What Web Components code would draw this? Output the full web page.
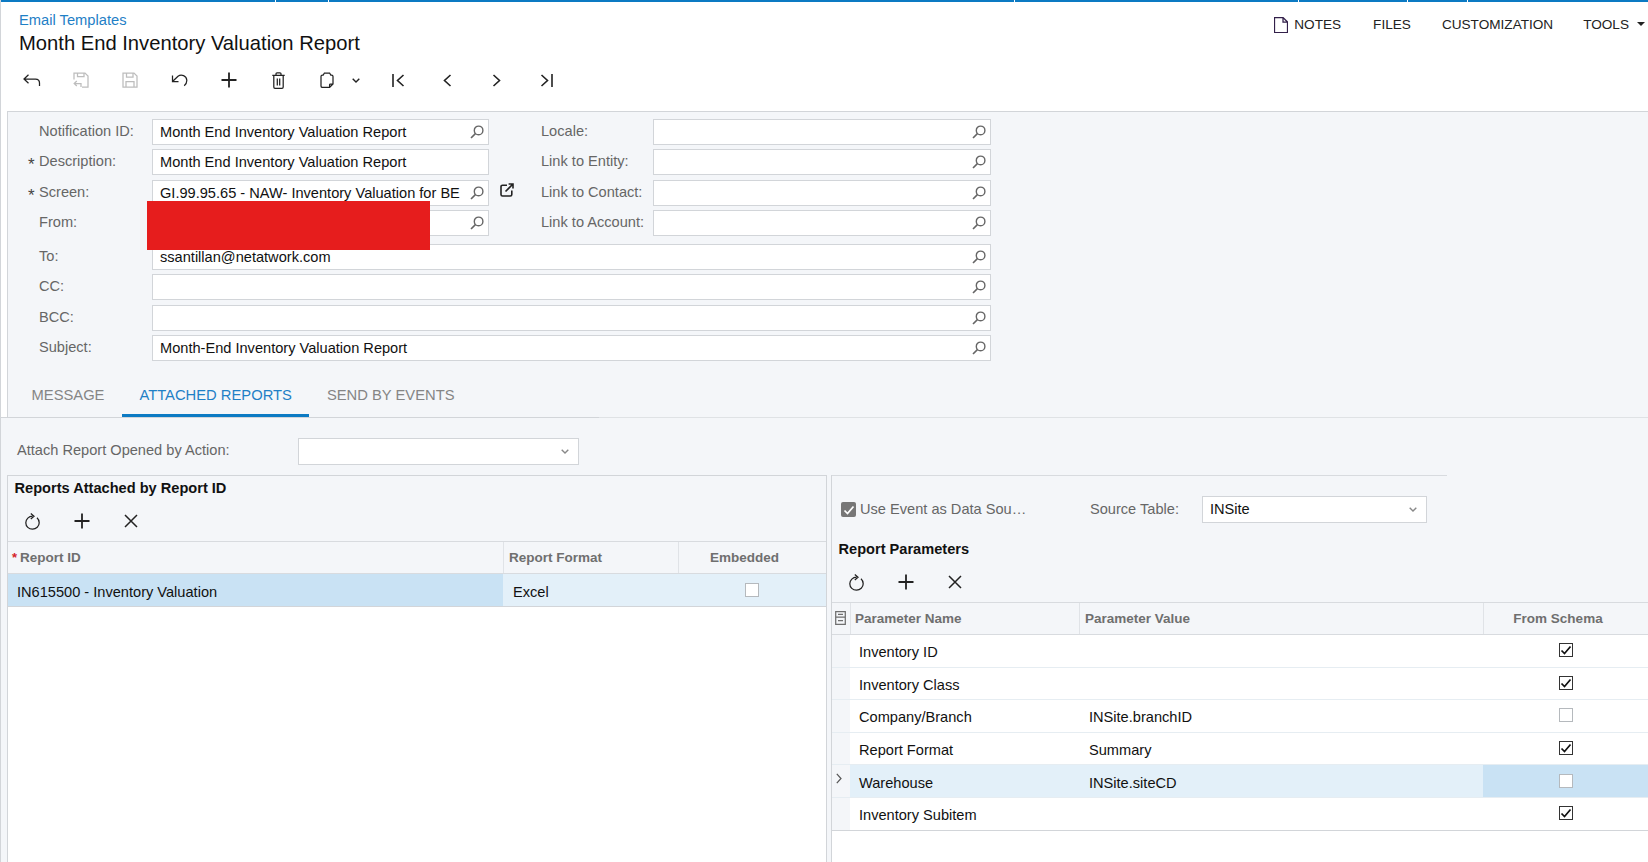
<!DOCTYPE html>
<html lang="en">
<head>
<meta charset="utf-8">
<title>Email Templates</title>
<style>
  html, body { margin: 0; padding: 0; background: #fff; }
</style>
</head>
<body>
<ac-page>
  <ac-stripe></ac-stripe>
  <ac-header></ac-header>
  <ac-form>
    <ac-tabs slot="tabs"></ac-tabs>
  </ac-form>
  <ac-attach></ac-attach>
  <ac-panels>
    <ac-reports slot="left"></ac-reports>
    <ac-params slot="right"></ac-params>
  </ac-panels>
  <ac-redaction></ac-redaction>
</ac-page>

<script>
const ICONS = {
  back: [18, 13, `<path d="M1 5H12.5C15 5 16.5 6.6 16.5 9V12M5.5 .8L1 5L5.5 9.2"/>`],
  saveclose: [16, 16, `<path d="M1 7.5V1H12L15 4V15H9M4.5 1V4.5H11V1M8 15V11.5H1.2M3.8 9L1.2 11.5L3.8 14"/>`],
  save: [16, 16, `<path d="M1 1H12L15 4V15H1ZM4.5 1V5H11V1M4 15V9.5H12V15"/>`],
  undo: [17, 13, `<path d="M1.5 7.5L7 2.2C10.5 -.3 15.5 2 15.8 6.2C15.9 8.4 15 10.4 13.2 11.8M1.5 1.6V7.5H7.5"/>`],
  plus: [16, 16, `<path d="M8 .5V15.5M.5 8H15.5" stroke-width="1.8"/>`],
  trash: [13, 17, `<path d="M1.8 3.5V15C1.8 15.8 2.4 16.3 3 16.3H10C10.7 16.3 11.2 15.8 11.2 15V3.5M.3 3.3H12.7M4 3.2V1.8C4 1.2 4.4 .8 5 .8H8C8.6 .8 9 1.2 9 1.8V3.2M5.3 6.5V13.5M7.7 6.5V13.5"/>`],
  paste: [14, 16, `<path d="M3.2 3H2.4C1.5 3 1 3.6 1 4.4V14C1 14.9 1.5 15.4 2.4 15.4H9.6L13 12V4.4C13 3.6 12.5 3 11.6 3H10.8L9.6 1H4.4ZM13 12H10.4C9.9 12 9.6 12.3 9.6 12.8V15.4"/>`],
  chevdown: [8, 5, `<path d="M.7 .7L4 4L7.3 .7" stroke-width="1.4"/>`],
  first: [13, 13, `<path d="M1 0V13M11.5 1L5.5 6.5L11.5 12" stroke-width="1.6"/>`],
  prev: [9, 13, `<path d="M7.5 1L1.5 6.5L7.5 12" stroke-width="1.6"/>`],
  next: [9, 13, `<path d="M1.5 1L7.5 6.5L1.5 12" stroke-width="1.6"/>`],
  last: [13, 13, `<path d="M12 0V13M1.5 1L7.5 6.5L1.5 12" stroke-width="1.6"/>`],
  search: [14, 14, `<circle cx="8.6" cy="5.4" r="4.3" stroke-width="1.4"/><path d="M5.4 8.6L1 13" stroke-width="1.6"/>`],
  external: [14, 14, `<path d="M7 2.2H2.5C1.6 2.2 1 2.8 1 3.7V11.5C1 12.4 1.6 13 2.5 13H10.3C11.2 13 11.8 12.4 11.8 11.5V7.5M5.5 8.5L13 1M8.6 1H13V5.4" stroke-width="1.6"/>`],
  note: [14, 16, `<path d="M.5 .5H9L13.5 5V15.5H.5ZM9 .5V5H13.5"/>`],
  caret: [8, 4, `<path d="M0 0H8L4 4Z" fill="currentColor" stroke="none"/>`],
  refresh: [15, 17, `<path d="M7.5 3.2C3.9 3.2 .8 6.1 .8 9.8C.8 13.5 3.8 16.2 7.5 16.2C11.2 16.2 14.2 13.3 14.2 9.8C14.2 7.8 13.3 6 12 4.8M5.8 .6L9 3.3L5.8 6"/>`],
  close: [14, 14, `<path d="M1 1L13 13M13 1L1 13" stroke-width="1.5"/>`],
  columns: [11, 14, `<path d="M.7 .7H10.3V13.3H.7ZM.7 6H10.3M3 3.3H8M3 9.5H8"/>`],
  rowpointer: [6, 11, `<path d="M.8 .8L5 5.5L.8 10.2" stroke-width="1.2"/>`],
  check: [12, 10, `<path d="M1.5 5.5L4.5 8.5L10.5 1.5" stroke-width="1.7"/>`]
};

class AcIcon extends HTMLElement{
  connectedCallback(){
    if(this.shadowRoot) return;
    const root = this.attachShadow({mode: "open"});
    const [w, h, body] = ICONS[this.getAttribute("name")];
    root.innerHTML = `
      <style>
        :host{ display: inline-flex; line-height: 0; color: inherit; }
        svg{ display: block; fill: none; stroke: currentColor; stroke-width: 1.25; }
      </style>
      <svg width="${w}" height="${h}" viewBox="0 0 ${w} ${h}">${body}</svg>`;
  }
}
customElements.define("ac-icon", AcIcon);

class AcPage extends HTMLElement{
  constructor(){
    super();
    this.attachShadow({mode: "open"}).innerHTML = `
      <style>
        :host{
          display: block;
          position: relative;
          width: 1647px;
          height: 862px;
          overflow: hidden;
          border-left: 1px solid #d2d5d9;
          background: #fff;
          color: #111;
          font-family: "Liberation Sans", Arial, sans-serif;
          font-size: 14.6px;
        }
      </style>
      <slot></slot>`;
  }
}
customElements.define("ac-page", AcPage);

class AcStripe extends HTMLElement{
  constructor(){
    super();
    const segs = [275, 52, 686, 283, 108, 59, 180];
    this.attachShadow({mode: "open"}).innerHTML = `
      <style>
        :host{ display: flex; gap: 1px; height: 2px; margin-left: -1px; background: #fff; }
        i{ display: block; background: #0c7ac3; }
      </style>
      ${segs.map(w => `<i style="width:${w}px"></i>`).join("")}`;
  }
}
customElements.define("ac-stripe", AcStripe);

class AcHeader extends HTMLElement{
  constructor(){
    super();
    const tool = (name, color, width) =>
      `<span class="tool" style="width:${width || 49.3}px;color:${color || "#222"}"><ac-icon name="${name}"></ac-icon></span>`;
    this.attachShadow({mode: "open"}).innerHTML = `
      <style>
        :host{ display: block; height: 109px; }
        .top{ display: flex; justify-content: space-between; height: 56px; }
        .titles{ padding: 9px 0 0 18px; }
        .crumb{ color: #1f80c6; font-size: 14.7px; line-height: 18px; }
        h1{ margin: 2px 0 0; font-size: 20.2px; font-weight: normal; line-height: 25px; color: #111; }
        .actions{ display: flex; align-items: center; height: 44px; font-size: 13.6px; color: #222; }
        .actions span{ display: inline-flex; align-items: center; }
        .notes ac-icon{ margin-right: 6px; margin-top: 2px; color: #33204a; }
        .files{ margin-left: 32px; }
        .custom{ margin-left: 31px; }
        .tools{ margin-left: 30px; margin-right: 3px; }
        .tools ac-icon{ margin-left: 8px; }
        .bar{ display: flex; align-items: center; height: 24px; margin-top: 10px; padding-left: 6px; }
        .tool{ display: inline-flex; justify-content: center; align-items: center; }
        .chev{ display: inline-flex; width: 21.5px; color: #222; }
      </style>
      <div class="top">
        <div class="titles">
          <div class="crumb">Email Templates</div>
          <h1>Month End Inventory Valuation Report</h1>
        </div>
        <div class="actions">
          <span class="notes"><ac-icon name="note"></ac-icon>NOTES</span>
          <span class="files">FILES</span>
          <span class="custom">CUSTOMIZATION</span>
          <span class="tools">TOOLS<ac-icon name="caret"></ac-icon></span>
        </div>
      </div>
      <div class="bar">
        ${tool("back")}
        ${tool("saveclose", "#bdbdbd")}
        ${tool("save", "#bdbdbd")}
        ${tool("undo")}
        ${tool("plus")}
        ${tool("trash")}
        ${tool("paste")}
        <span class="chev"><ac-icon name="chevdown"></ac-icon></span>
        ${tool("first")}
        ${tool("prev")}
        ${tool("next")}
        ${tool("last")}
      </div>`;
  }
}
customElements.define("ac-header", AcHeader);

class AcField extends HTMLElement{
  constructor(){
    super();
    const label = this.getAttribute("label");
    const value = this.getAttribute("value") || "";
    const req = this.hasAttribute("required");
    const search = this.hasAttribute("nosearch") ? "" : `<ac-icon name="search"></ac-icon>`;
    this.attachShadow({mode: "open"}).innerHTML = `
      <style>
        :host{ display: grid; grid-template-columns: 11px var(--label-width, 113px) 1fr; align-items: center; height: 26px; }
        .star{ font-size: 17px; color: #444; padding-top: 6px; line-height: 16px; }
        label{ color: #666; padding-bottom: 2px; white-space: nowrap; }
        .box{
          display: flex; align-items: center; justify-content: space-between;
          box-sizing: border-box; height: 26px;
          padding: 0 4px 0 7px;
          border: 1px solid #d2d5d9; background: #fff; color: #111;
          white-space: nowrap;
        }
        ac-icon{ color: #666; flex: none; }
      </style>
      <span class="star">${req ? "*" : ""}</span>
      <label>${label}</label>
      <div class="box"><span>${value}</span>${search}</div>`;
  }
}
customElements.define("ac-field", AcField);

class AcForm extends HTMLElement{
  constructor(){
    super();
    this.attachShadow({mode: "open"}).innerHTML = `
      <style>
        :host{
          display: flex; flex-direction: column;
          box-sizing: border-box;
          height: 306px;
          margin-left: 6px;
          padding: 6.6px 0 0 20px;
          border-top: 1px solid #d2d5d9;
          border-left: 1px solid #d2d5d9;
          background: #f4f6f9;
        }
        .upper{ display: grid; grid-template-columns: 461px 41px 461px; row-gap: 4.5px; }
        .lower{ display: grid; grid-template-columns: 963px; row-gap: 4.4px; margin-top: 7.7px; }
        .short{ --label-width: 112px; }
        .ext{ color: #222; padding: 3px 0 0 11px; line-height: 0; }
        .tabs{ margin: auto 0 0 -14px; }
      </style>
      <div class="upper">
        <ac-field label="Notification ID:" value="Month End Inventory Valuation Report"></ac-field>
        <span></span>
        <ac-field class="short" label="Locale:"></ac-field>
        <ac-field label="Description:" value="Month End Inventory Valuation Report" required nosearch></ac-field>
        <span></span>
        <ac-field class="short" label="Link to Entity:"></ac-field>
        <ac-field label="Screen:" value="GI.99.95.65 - NAW- Inventory Valuation for BE" required></ac-field>
        <span class="ext"><ac-icon name="external"></ac-icon></span>
        <ac-field class="short" label="Link to Contact:"></ac-field>
        <ac-field label="From:"></ac-field>
        <span></span>
        <ac-field class="short" label="Link to Account:"></ac-field>
      </div>
      <div class="lower">
        <ac-field label="To:" value="ssantillan@netatwork.com"></ac-field>
        <ac-field label="CC:"></ac-field>
        <ac-field label="BCC:"></ac-field>
        <ac-field label="Subject:" value="Month-End Inventory Valuation Report"></ac-field>
      </div>
      <div class="tabs"><slot name="tabs"></slot></div>`;
  }
}
customElements.define("ac-form", AcForm);

class AcTabs extends HTMLElement{
  constructor(){
    super();
    this.attachShadow({mode: "open"}).innerHTML = `
      <style>
        :host{ display: flex; height: 43px; font-size: 14.75px; color: #858585; }
        span{
          box-sizing: border-box; height: 43px;
          padding: 12px 17.5px 0;
          line-height: 18px;
          white-space: nowrap;
        }
        .on{ color: #1f80c6; border-bottom: 3px solid #0c7ac3; }
      </style>
      <span>MESSAGE</span>
      <span class="on">ATTACHED REPORTS</span>
      <span>SEND BY EVENTS</span>`;
  }
}
customElements.define("ac-tabs", AcTabs);

class AcSelect extends HTMLElement{
  constructor(){
    super();
    this.attachShadow({mode: "open"}).innerHTML = `
      <style>
        :host{
          display: flex; align-items: center; justify-content: space-between;
          box-sizing: border-box; height: 26.5px;
          padding: 0 9px 0 7px;
          border: 1px solid #d2d5d9; background: #fff; color: #111;
        }
        span{ padding-bottom: 2px; }
        ac-icon{ color: #888; }
      </style>
      <span><slot></slot></span>
      <ac-icon name="chevdown"></ac-icon>`;
  }
}
customElements.define("ac-select", AcSelect);

class AcAttach extends HTMLElement{
  constructor(){
    super();
    this.attachShadow({mode: "open"}).innerHTML = `
      <style>
        :host{ display: block; height: 58px; box-sizing: border-box; background: #f4f6f9; border-top: 1px solid #dfe2e5; }
        .dark{ height: 1px; width: 598px; background: #d2d5d9; margin-top: -1px; }
        .row{ display: flex; align-items: center; padding: 20px 0 0 16px; }
        label{ width: 281.4px; color: #666; padding-bottom: 2px; }
        ac-select{ width: 280.6px; }
      </style>
      <div class="dark"></div>
      <div class="row">
        <label>Attach Report Opened by Action:</label>
        <ac-select></ac-select>
      </div>`;
  }
}
customElements.define("ac-attach", AcAttach);

class AcPanels extends HTMLElement{
  constructor(){
    super();
    this.attachShadow({mode: "open"}).innerHTML = `
      <style>
        :host{ display: flex; gap: 4px; height: 387px; padding-left: 6px; background: #f4f6f9; }
        ::slotted([slot=left]){ width: 820px; flex: none; }
        ::slotted([slot=right]){ flex: 1; min-width: 0; }
      </style>
      <slot name="left"></slot>
      <slot name="right"></slot>`;
  }
}
customElements.define("ac-panels", AcPanels);

class AcGridTools extends HTMLElement{
  constructor(){
    super();
    this.attachShadow({mode: "open"}).innerHTML = `
      <style>
        :host{ display: flex; align-items: center; height: 24px; color: #222; }
        span{ display: inline-flex; justify-content: center; width: 49px; }
      </style>
      <span><ac-icon name="refresh"></ac-icon></span>
      <span><ac-icon name="plus"></ac-icon></span>
      <span><ac-icon name="close"></ac-icon></span>`;
  }
}
customElements.define("ac-grid-tools", AcGridTools);

class AcGrid extends HTMLElement{
  constructor(){
    super();
    this.shadowDOM = this.attachShadow({mode: "open"});
  }

  set data(data){
    this._data = data;
    this.render();
  }

  renderBox(on){
    const cls = on ? "cb on" : "cb";
    return `<span class="${cls}">${on ? `<ac-icon name="check"></ac-icon>` : ""}</span>`;
  }

  render(){
    const d = this._data;
    const head = d.columns.map(c => `
      <div class="th ${c.center ? "center" : ""}" style="${c.pad ? `padding-left:${c.pad}px` : ""}">
        ${c.star ? `<b class="star">*</b>` : ""}${c.icon ? `<ac-icon name="${c.icon}"></ac-icon>` : (c.title || "")}
      </div>`).join("");
    const rows = d.rows.map(r => {
      const cells = r.cells.map((v, i) => {
        const col = d.columns[i];
        const sel = r.selected ? (i === r.activeCell ? "active" : "selected") : "";
        if(col.pointer){
          return `<div class="td pointer">${r.selected ? `<ac-icon name="rowpointer"></ac-icon>` : ""}</div>`;
        }
        if(col.center){
          return `<div class="td center ${sel}">${this.renderBox(v)}</div>`;
        }
        return `<div class="td ${sel}" style="padding-left:${col.textPad}px">${v}</div>`;
      }).join("");
      return `<div class="tr" style="height:${d.rowHeight}px">${cells}</div>`;
    }).join("");
    const cols = d.columns.map(c => c.width).join(" ");
    this.shadowDOM.innerHTML = `
      <style>
        :host{ display: block; flex: 1; background: #fff; }
        .tr, .thead{ display: grid; grid-template-columns: ${cols}; box-sizing: border-box; }
        .thead{ height: ${d.headHeight}px; background: #f4f6f9; border-top: 1px solid #d8dbdf; border-bottom: 1px solid #d8dbdf; }
        .th{
          display: flex; align-items: center;
          font-weight: bold; font-size: 13.5px; color: #6f6f6f;
          border-left: 1px solid #e0e3e7;
          white-space: nowrap;
          min-width: 0;
          padding-bottom: 1px;
        }
        .th:first-child{ border-left: 0; }
        .th.center{ justify-content: center; padding-right: 16px; }
        .star{ color: #d5232a; font-size: 13px; margin-right: 3px; }
        .tr{ border-bottom: 1px solid #e6edf2; }
        .tr:last-child{ border-bottom-color: #d2d5d9; }
        .td{ display: flex; align-items: center; min-width: 0; white-space: nowrap; padding-top: ${d.textTop}px; color: #111; }
        .td.center{ justify-content: center; padding-top: ${d.boxTop}px; padding-bottom: ${d.boxBottom}px; }
        .td.pointer{ background: #f4f6f9; align-items: flex-start; padding: 8px 0 0 4px; box-sizing: border-box; color: #555; }
        .selected{ background: #e3f0f9; }
        .active{ background: #c9e2f4; }
        .cb{
          display: inline-flex; align-items: center; justify-content: center;
          box-sizing: border-box; width: 14px; height: 14px;
          border: 1px solid #b5b9bd; background: #fff; color: #111;
        }
        .cb.on{ border: 1px solid #333; }
      </style>
      <div class="thead">${head}</div>
      ${rows}`;
  }
}
customElements.define("ac-grid", AcGrid);

class AcReports extends HTMLElement{
  constructor(){
    super();
    this.attachShadow({mode: "open"}).innerHTML = `
      <style>
        :host{
          display: flex; flex-direction: column; box-sizing: border-box;
          border: 1px solid #d2d5d9; border-bottom: 0;
          background: #f4f6f9;
        }
        h3{ margin: 3px 0 0 6.5px; font-size: 14.6px; line-height: 18px; color: #111; }
        ac-grid-tools{ margin: 12px 0 8px 0; }
      </style>
      <h3>Reports Attached by Report ID</h3>
      <ac-grid-tools></ac-grid-tools>
      <ac-grid></ac-grid>`;
    this.shadowRoot.querySelector("ac-grid").data = {
      headHeight: 33,
      rowHeight: 32.7,
      textTop: 4,
      boxTop: 1,
      boxBottom: 0,
      columns: [
        {title: "Report ID", width: "495px", star: true, pad: 4, textPad: 9},
        {title: "Report Format", width: "175px", pad: 5, textPad: 10},
        {title: "Embedded", width: "1fr", center: true}
      ],
      rows: [
        {selected: true, activeCell: 0, cells: ["IN615500 - Inventory Valuation", "Excel", false]}
      ]
    };
  }
}
customElements.define("ac-reports", AcReports);

class AcParams extends HTMLElement{
  constructor(){
    super();
    this.attachShadow({mode: "open"}).innerHTML = `
      <style>
        :host{
          display: flex; flex-direction: column; box-sizing: border-box;
          border-left: 1px solid #d2d5d9;
          background: #f4f6f9;
        }
        .rule{ height: 1px; width: 615px; background: #d8dbdf; }
        .opts{ display: flex; align-items: center; height: 27px; margin-top: 20px; padding-left: 9px; color: #666; }
        .gray{
          display: inline-flex; align-items: center; justify-content: center;
          width: 15px; height: 15px; border-radius: 2px;
          background: #777; color: #fff; margin-right: 4px;
        }
        .use{ width: 229px; white-space: nowrap; padding-bottom: 2px; }
        .src{ width: 112px; margin-left: 1px; white-space: nowrap; padding-bottom: 2px; }
        ac-select{ width: 225px; }
        h3{ margin: 17px 0 0 6.5px; font-size: 14.6px; line-height: 18px; color: #111; }
        ac-grid-tools{ margin: 12px 0 8px 0; }
      </style>
      <div class="rule"></div>
      <div class="opts">
        <span class="gray"><ac-icon name="check"></ac-icon></span>
        <span class="use">Use Event as Data Sou…</span>
        <span class="src">Source Table:</span>
        <ac-select>INSite</ac-select>
      </div>
      <h3>Report Parameters</h3>
      <ac-grid-tools></ac-grid-tools>
      <ac-grid></ac-grid>`;
    this.shadowRoot.querySelector("ac-grid").data = {
      headHeight: 33,
      rowHeight: 32.6,
      textTop: 3,
      boxTop: 0,
      boxBottom: 1,
      columns: [
        {icon: "columns", width: "18px", pointer: true, pad: 3},
        {title: "Parameter Name", width: "229px", pad: 4, textPad: 9},
        {title: "Parameter Value", width: "404px", pad: 5, textPad: 10},
        {title: "From Schema", width: "1fr", center: true}
      ],
      rows: [
        {cells: ["", "Inventory ID", "", true]},
        {cells: ["", "Inventory Class", "", true]},
        {cells: ["", "Company/Branch", "INSite.branchID", false]},
        {cells: ["", "Report Format", "Summary", true]},
        {selected: true, activeCell: 3, cells: ["", "Warehouse", "INSite.siteCD", false]},
        {cells: ["", "Inventory Subitem", "", true]}
      ]
    };
  }
}
customElements.define("ac-params", AcParams);

class AcRedaction extends HTMLElement{
  constructor(){
    super();
    this.attachShadow({mode: "open"}).innerHTML = `
      <style>
        :host{ position: absolute; left: 146px; top: 201px; width: 283px; height: 49px; background: #e61d1d; }
      </style>`;
  }
}
customElements.define("ac-redaction", AcRedaction);
</script>
</body>
</html>
